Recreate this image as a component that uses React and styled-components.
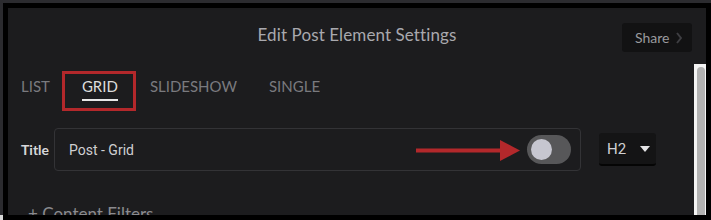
import React from "react";
import styled, { createGlobalStyle } from "styled-components";

const Global = createGlobalStyle`
  html, body { margin: 0; padding: 0; background: #2b2b2f; }
  body { width: 711px; height: 220px; overflow: hidden; font-family: Lato, "Open Sans", sans-serif; }
`;

const Outer = styled.div`
  width: 711px;
  height: 220px;
  box-sizing: border-box;
  padding: 3px 0 0 3px;
  background: #2b2b2f;
  position: relative;
`;

const CornerNub = styled.div`
  position: absolute;
  left: 0;
  bottom: 0;
  width: 3px;
  height: 5px;
  background: #d8d8d8;
`;

const Frame = styled.div`
  width: 100%;
  height: 100%;
  box-sizing: border-box;
  border: 5px solid #000;
  background: #1c1c1e;
  display: flex;
  flex-direction: column;
  overflow: hidden;
`;

const Header = styled.div`
  height: 56px;
  flex: none;
  display: flex;
  align-items: flex-start;
  justify-content: flex-end;
  position: relative;
  padding: 15px 14px 0 0;
  box-sizing: border-box;
`;

const HeaderTitle = styled.div`
  position: absolute;
  left: 0;
  right: 0;
  top: 16px;
  text-align: center;
  font-size: 17px;
  color: #a9a9ae;
  letter-spacing: 0.1px;
`;

const ShareButton = styled.div`
  width: 70px;
  height: 29px;
  background: #121213;
  border-radius: 3px;
  display: flex;
  align-items: center;
  padding-left: 13px;
  box-sizing: border-box;
  gap: 7px;
  font-size: 14px;
  color: #9a9a9e;
  position: relative;
  z-index: 1;
`;

const Chevron = styled.svg`
  width: 6px;
  height: 12px;
`;

const Body = styled.div`
  flex: 1;
  display: flex;
  min-height: 0;
`;

const Content = styled.div`
  flex: 1;
  padding: 0 0 0 13px;
  display: flex;
  flex-direction: column;
  min-height: 0;
`;

const Tabs = styled.div`
  display: flex;
  gap: 32px;
  height: 48px;
  align-items: flex-start;
  padding-top: 13px;
  box-sizing: border-box;
  flex: none;
`;

const Tab = styled.div`
  position: relative;
  font-size: 15px;
  color: ${(p) => (p.$active ? "#dcdcdc" : "#7a7a7e")};
  padding-bottom: 4px;
  border-bottom: 2px solid ${(p) => (p.$active ? "#e8e8e8" : "transparent")};
  line-height: 18px;
  ${(p) =>
    p.$active &&
    `&::after {
      content: "";
      position: absolute;
      left: -20px;
      right: -18px;
      top: -6px;
      height: 40px;
      box-sizing: border-box;
      border: 3px solid #b3282b;
    }`}
`;

const FieldRow = styled.div`
  display: flex;
  align-items: center;
  margin-top: 16px;
  flex: none;
`;

const Label = styled.div`
  font-weight: 700;
  font-size: 14px;
  color: #d6d6d8;
  width: 33px;
  flex: none;
`;

const Input = styled.div`
  width: 527px;
  height: 43px;
  box-sizing: border-box;
  border: 1px solid #333336;
  border-radius: 4px;
  display: flex;
  align-items: center;
  justify-content: space-between;
  padding: 0 9px 0 14px;
  position: relative;
  font-family: Roboto, "Noto Sans", sans-serif;
  font-size: 14px;
  color: #cfcfd2;
`;

const Arrow = styled.svg`
  position: absolute;
  right: 60px;
  top: 11px;
  width: 104px;
  height: 21px;
`;

const Toggle = styled.div`
  width: 44px;
  height: 29px;
  border-radius: 15px;
  background: #575759;
  display: flex;
  align-items: center;
  padding-left: 4px;
  box-sizing: border-box;
`;

const Knob = styled.div`
  width: 21px;
  height: 21px;
  border-radius: 50%;
  background: #c6c6d0;
`;

const Select = styled.div`
  margin-left: 18px;
  width: 57px;
  height: 33px;
  box-sizing: border-box;
  background: #141415;
  border-bottom: 2px solid #050505;
  border-radius: 3px;
  display: flex;
  align-items: center;
  justify-content: space-between;
  padding: 0 6px 0 8px;
  font-family: Roboto, "Noto Sans", sans-serif;
  font-size: 15px;
  color: #cfcfd2;
`;

const Caret = styled.svg`
  width: 10px;
  height: 6px;
`;

const AddFilters = styled.div`
  margin-top: 32px;
  margin-left: 7px;
  font-size: 17px;
  color: #8a8a8e;
  flex: none;
`;

const Scrollbar = styled.div`
  width: 12px;
  flex: none;
  background: #f4f4f4;
  display: flex;
  justify-content: center;
  padding-top: 3px;
  box-sizing: border-box;
`;

const Thumb = styled.div`
  width: 8px;
  margin-left: 1px;
  height: 100%;
  background: #b2b2b2;
  border-radius: 4px 4px 0 0;
`;

export default function App() {
  return (
    <>
      <Global />
      <Outer>
        <Frame>
          <Header>
            <HeaderTitle>Edit Post Element Settings</HeaderTitle>
            <ShareButton>
              Share
              <Chevron viewBox="0 0 6 12">
                <path d="M1 1 L5 6 L1 11" stroke="#3e3e42" strokeWidth="2" fill="none" />
              </Chevron>
            </ShareButton>
          </Header>
          <Body>
            <Content>
              <Tabs>
                <Tab>LIST</Tab>
                <Tab $active>GRID</Tab>
                <Tab>SLIDESHOW</Tab>
                <Tab>SINGLE</Tab>
              </Tabs>
              <FieldRow>
                <Label>Title</Label>
                <Input>
                  Post - Grid
                  <Arrow viewBox="0 0 104 21">
                    <rect x="0" y="8.5" width="86" height="4" fill="#b3282b" />
                    <polygon points="84,0 104,10.5 84,21" fill="#b3282b" />
                  </Arrow>
                  <Toggle>
                    <Knob />
                  </Toggle>
                </Input>
                <Select>
                  H2
                  <Caret viewBox="0 0 10 6">
                    <polygon points="0,0 10,0 5,6" fill="#e4e4e6" />
                  </Caret>
                </Select>
              </FieldRow>
              <AddFilters>+ Content Filters</AddFilters>
            </Content>
            <Scrollbar>
              <Thumb />
            </Scrollbar>
          </Body>
        </Frame>
        <CornerNub />
      </Outer>
    </>
  );
}
